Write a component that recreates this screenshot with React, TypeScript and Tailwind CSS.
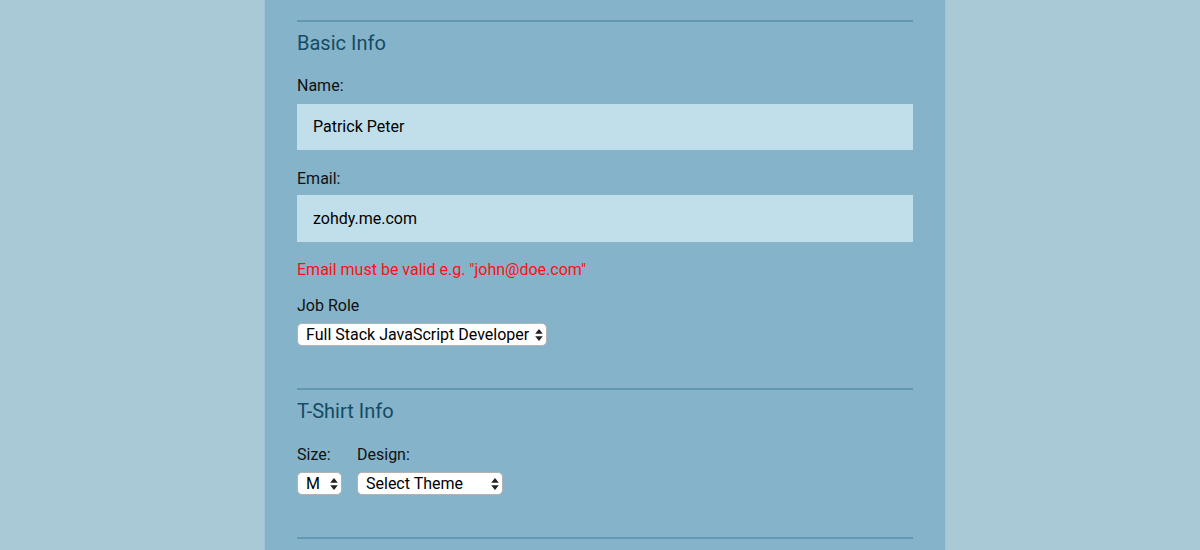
import React from 'react'

function Arrows() {
  return (
    <svg width="8" height="13" viewBox="0 0 8 13" className="pointer-events-none absolute right-[4px] top-1/2 -translate-y-1/2">
      <path d="M4 0.5 L7.8 5.2 L0.2 5.2 Z" fill="#222" />
      <path d="M4 12.5 L7.8 7.8 L0.2 7.8 Z" fill="#222" />
    </svg>
  )
}

function Select({ value, width }: { value: string; width: string }) {
  return (
    <div className={`relative ${width}`}>
      <select
        defaultValue={value}
        className="block h-[23px] w-full appearance-none rounded-[5px] border border-[#b3b3b3] bg-white pl-[8px] pr-[16px] text-[16px] leading-[21px] text-black"
      >
        <option>{value}</option>
      </select>
      <Arrows />
    </div>
  )
}

function Divider() {
  return <div className="h-[2px] bg-[#6199b3]" />
}

export default function App() {
  return (
    <div className="flex h-[550px] justify-center overflow-hidden bg-[#a9c9d6] pl-[10px] font-['Roboto',sans-serif] text-[#111]">
      <div className="w-[680px] bg-[#84b3ca] px-8 pt-5 shadow-[1px_0_0_#9dc3d5,-1px_0_0_#9dc3d5]">
        {/* Basic Info */}
        <Divider />
        <h2 className="mt-[9px] text-[20px] leading-6 text-[#164b64]">Basic Info</h2>

        <label className="mt-[19px] block text-[16px] leading-6">Name:</label>
        <div className="mt-[6px] flex h-[46px] items-center bg-[#c1dfea] px-4 text-[16px] text-black">
          Patrick Peter
        </div>

        <label className="mt-[17px] block text-[16px] leading-6">Email:</label>
        <div className="mt-[4px] flex h-[47px] items-center bg-[#c1dfea] px-4 text-[16px] text-black">
          zohdy.me.com
        </div>

        <p className="mt-[16px] text-[16px] leading-6 text-[#ff1010]">
          Email must be valid e.g. "john@doe.com"
        </p>

        <label className="mt-[12px] block text-[16px] leading-6">Job Role</label>
        <div className="mt-[5px]">
          <Select value="Full Stack JavaScript Developer" width="w-[250px]" />
        </div>

        {/* T-Shirt Info */}
        <div className="mt-[42px]">
          <Divider />
        </div>
        <h2 className="mt-[9px] text-[20px] leading-6 text-[#164b64]">T-Shirt Info</h2>

        <div className="mt-[20px] flex gap-[15px]">
          <div>
            <label className="block text-[16px] leading-6">Size:</label>
            <div className="mt-[5px]">
              <Select value="M" width="w-[45px]" />
            </div>
          </div>
          <div>
            <label className="block text-[16px] leading-6">Design:</label>
            <div className="mt-[5px]">
              <Select value="Select Theme" width="w-[146px]" />
            </div>
          </div>
        </div>

        <div className="mt-[42px]">
          <Divider />
        </div>
      </div>
    </div>
  )
}
